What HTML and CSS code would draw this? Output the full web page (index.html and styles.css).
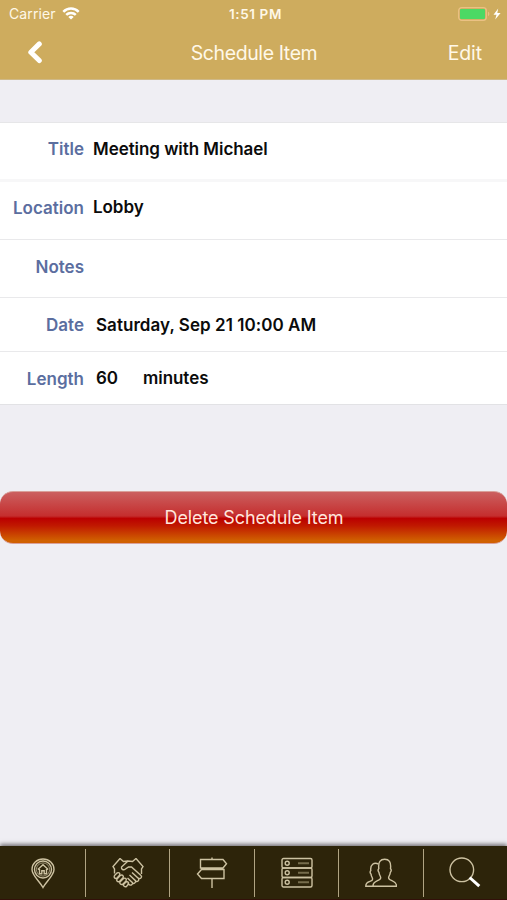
FILE: index.html
```html
<!DOCTYPE html>
<html lang="en">

<head>
    <meta charset="utf-8">
    <meta name="viewport" content="width=device-width, initial-scale=1">
    <title>Schedule Item</title>
    <link rel="stylesheet" href="styles.css">
</head>

<body>
    <!-- Status bar and navigation -->
    <div class="header">
        <div class="status">
            <div class="status-left">
                <span class="carrier">Carrier</span>
                <svg class="wifi" width="18" height="13" viewBox="0 0 18 13" fill="none" stroke="#fff" stroke-width="2.5">
                    <path d="M1.3 4.8a10.9 10.9 0 0 1 15.4 0" />
                    <path d="M4.2 7.9a6.8 6.8 0 0 1 9.6 0" />
                    <path d="M9 12.6L6.3 10a3.8 3.8 0 0 1 5.4 0z" fill="#fff" stroke="none" />
                </svg>
            </div>
            <span class="clock">1:51 PM</span>
            <div class="status-right">
                <svg width="44" height="14" viewBox="0 0 44 14">
                    <rect x=".7" y=".7" width="27.6" height="12.6" rx="3" fill="none" stroke="#ebc184" stroke-width="1.3" />
                    <rect x="2" y="2" width="25" height="10" rx="1" fill="#4cd964" />
                    <path d="M30 4.8c1.8.5 1.8 3.9 0 4.4z" fill="#ebc184" />
                    <path d="M40.2 1.5L35.5 7.8h3l-1.3 4.7 5.4-6.5h-3.3z" fill="#fff" />
                </svg>
            </div>
        </div>
        <div class="nav">
            <a class="back" href="#">
                <svg width="16" height="24" viewBox="0 0 16 24" fill="none" stroke="#fff" stroke-width="5">
                    <path d="M12.3 2.900L3.800 11.200l8.500 8.300" stroke-linejoin="round" stroke-linecap="round" />
                </svg>
            </a>
            <span class="nav-title">Schedule Item</span>
            <a class="edit" href="#">Edit</a>
        </div>
    </div>

    <!-- Item details -->
    <div class="main">
        <div class="details">
            <div class="row row-title">
                <span class="label">Title</span>
                <span class="value">Meeting with Michael</span>
            </div>
            <div class="row row-location">
                <span class="label">Location</span>
                <span class="value">Lobby</span>
            </div>
            <div class="row">
                <span class="label">Notes</span>
                <span class="value"></span>
            </div>
            <div class="row row-small">
                <span class="label">Date</span>
                <span class="value date">Saturday, Sep 21 10:00 AM</span>
            </div>
            <div class="row row-small">
                <span class="label">Length</span>
                <span class="value amount">60</span>
                <span class="value">minutes</span>
            </div>
        </div>
        <button class="delete-button">Delete Schedule Item</button>
    </div>

    <!-- Bottom tabs -->
    <div class="tabs">
        <a class="tab" href="#">
            <svg width="32" height="32" viewBox="0 0 32 32">
                <path d="M16 30.5C12.5 24 5 18.5 5 12.5a11 10.5 0 0 1 22 0C27 18.5 19.5 24 16 30.5z" />
                <circle cx="16" cy="12.5" r="8.5" />
                <circle cx="16" cy="12.5" r="6.6" stroke-width=".7" />
                <path d="M10.8 12.5L16 7.8l5.2 4.7M12.5 12v4.8h2.3v-3h2.4v3h2.3V12" />
            </svg>
        </a>
        <a class="tab" href="#">
            <svg width="32" height="32" viewBox="0 0 32 32">
                <path d="M8 1.5L1 9.5l1.5 2.5v4.5M8 1.5l3.5 3 4.5-.5M24 1.5l7 8-1.5 2.5v5M24 1.5l-3.5 3-4.5-.5-6.5 6c-.5 2.5 2 3.5 4 2l3-2h3l9.5 8.5c1.5 1.5-.5 4-2.5 2.7" />
                <path d="M20 15.5l6.5 6c1 2-1 3.7-3 2.5M17.5 18l6 5.7c.5 2-1.5 3.5-3.3 2.3M15.5 21l5 4.7c.3 2.3-1.7 3-3.3 2l-1.5-1.2" />
                <path d="M2.5 18.5l2.5-2.5c2-1 3.5.5 2.5 2.3l-2.7 2.9c-2 .8-3.3-1-2.3-2.7zM5 22l3.5-3.7c2-1 3.5.6 2.5 2.4l-3.5 3.8c-2 .8-3.4-.8-2.5-2.5zM8 25l3.5-3.5c2-1 3.4.5 2.5 2.4l-3.2 3.4c-2 .6-3.5-.7-2.8-2.3zM11.5 27.5l2.5-2.5c2-.7 3.2.7 2.3 2.3L14.5 29.5c-1.8.7-3.5-.6-3-2z" />
            </svg>
        </a>
        <a class="tab" href="#">
            <svg width="32" height="32" viewBox="0 0 32 32">
                <path d="M4.5 2.5h22.5l3.5 4.3-3.5 4.2H4.5zM28 12.5H5.500l-4 4.500 4 4.500H28zM16 .5v2M16 11v1.500M16 21.500V31" />
            </svg>
        </a>
        <a class="tab" href="#">
            <svg width="32" height="32" viewBox="0 0 32 32">
                <rect x="1" y="1.5" width="30" height="9.5" rx="1.5" />
                <rect x="1" y="11" width="30" height="9.5" rx="1.5" />
                <rect x="1" y="20.5" width="30" height="9.5" rx="1.5" />
                <circle cx="6.2" cy="6.3" r="2" />
                <circle cx="6.2" cy="15.8" r="2" />
                <circle cx="6.2" cy="25.2" r="2" />
                <path class="slots" d="M17 6.3h11M17 15.8h11M17 25.2h11" />
            </svg>
        </a>
        <a class="tab" href="#">
            <svg width="32" height="32" viewBox="0 0 32 32">
                <path d="M8 29.3c-.5-6.3 7.7-4.8 7.700-8.600 0-1.700-1.500-2.300-1.700-5.200-1.300-1.500-1-3-.2-4C13 5 15.500 2.300 19.700 2.300S26.300 5 25.500 11.500c.8 1 1.100 2.500-.2 4-.2 2.900-1.700 3.500-1.700 5.200 0 3.800 8.400 2.300 7.900 8.600z" />
                <path d="M13.5 7C9 5 5 7.5 5.8 13.5c-.8 1-.8 2.5.3 3.7 0 2.5 1.500 3 1.500 5 0 3.300-7.100.8-6.800 7.100H8" />
            </svg>
        </a>
        <a class="tab" href="#">
            <svg width="32" height="32" viewBox="0 0 32 32">
                <circle cx="12.8" cy="12.8" r="11.8" />
                <path class="handle" d="M20.6 20.5l9.7 8.7" />
            </svg>
        </a>
    </div>
</body>

</html>
```
FILE: styles.css
```css
* {
    box-sizing: border-box;
}

body {
    margin: 0;
    height: 900px;
    display: flex;
    flex-direction: column;
    overflow: hidden;
    background-color: #efeef3;
    font-family: Inter, "Liberation Sans", sans-serif;
}

a {
    color: inherit;
    text-decoration: none;
}

svg {
    display: block;
}

/* Header */
.header {
    height: 80px;
    flex: none;
    background-color: #ceac5e;
    border-bottom: 1px solid #cfb988;
    color: #fff8e8;
}

.status {
    height: 27px;
    display: grid;
    grid-template-columns: 1fr auto 1fr;
    align-items: center;
    padding: 0 5px 0 9px;
    font-size: 14px;
}

.status-left {
    display: flex;
    align-items: center;
    gap: 6px;
}

.carrier {
    letter-spacing: 0.1px;
}

.clock {
    font-size: 13.5px;
    font-weight: 600;
    letter-spacing: 0.6px;
}

.status-right {
    display: flex;
    justify-content: flex-end;
}

.nav {
    height: 51px;
    display: grid;
    grid-template-columns: 1fr auto 1fr;
    align-items: center;
    padding: 0 25px 0 27px;
    font-size: 19.5px;
    letter-spacing: -0.4px;
}

.nav-title {
    margin-left: -1px;
}

.edit {
    text-align: right;
    letter-spacing: -0.1px;
}

/* Details */
.main {
    flex: 1;
    padding-top: 42px;
}

.details {
    background-color: #fff;
    border-top: 1px solid #e6e6e8;
    border-bottom: 1px solid #e2e2e5;
    font-size: 17px;
    font-weight: 600;
}

.row {
    display: flex;
    align-items: center;
    height: 58px;
    padding-bottom: 5px;
    border-bottom: 1px solid #e9e9eb;
}

.row-title {
    height: 59px;
    border-bottom: 3px solid #f7f7f8;
}

.row-location {
    padding-bottom: 7px;
}

.row-small {
    height: 54px;
    padding-bottom: 0;
}

.row-small:last-child {
    height: 52px;
    border-bottom: none;
}

.label {
    width: 84px;
    margin-right: 9px;
    padding-top: 1px;
    text-align: right;
    color: #5b6e9f;
}

.value {
    color: #0b0b0b;
    letter-spacing: -0.05px;
}

.row-small .label {
    margin-right: 12px;
}

.date {
    letter-spacing: 0.05px;
}

.amount {
    width: 47px;
}

.delete-button {
    display: block;
    width: 100%;
    height: 53px;
    margin-top: 86px;
    padding: 0 0 0 1px;
    border: 1px solid #d9a09a;
    border-width: 1px 0;
    border-radius: 13px;
    background: linear-gradient(#cb6060 0%, #c52e2e 47%, #bb0000 52%, #c01800 66%, #d06000 95%, #d06000 100%);
    color: #ffe6dc;
    font-family: inherit;
    font-size: 18px;
    letter-spacing: -0.12px;
}

/* Tabs */
.tabs {
    flex: none;
    height: 54px;
    display: grid;
    grid-template-columns: 86px 84px 85px 84px 85px 83px;
    background-color: #2d240a;
    border-bottom: 1px solid #33100a;
    box-shadow: 0 -2px 4px rgba(40, 35, 40, 0.6);
}

.tab {
    display: flex;
    align-items: center;
    justify-content: center;
    position: relative;
}

.tab:not(:last-child)::after {
    content: "";
    position: absolute;
    right: 0;
    top: 3px;
    bottom: 2px;
    width: 1.5px;
    background-color: #b0a483;
}

.tab svg {
    fill: none;
    stroke: #cdc2a2;
    stroke-width: 1.4;
    margin-right: 1px;
}

.tab .slots {
    stroke: #766c4c;
    stroke-width: 2;
}

.tab .handle {
    stroke: #fff;
    stroke-width: 3;
}
```
